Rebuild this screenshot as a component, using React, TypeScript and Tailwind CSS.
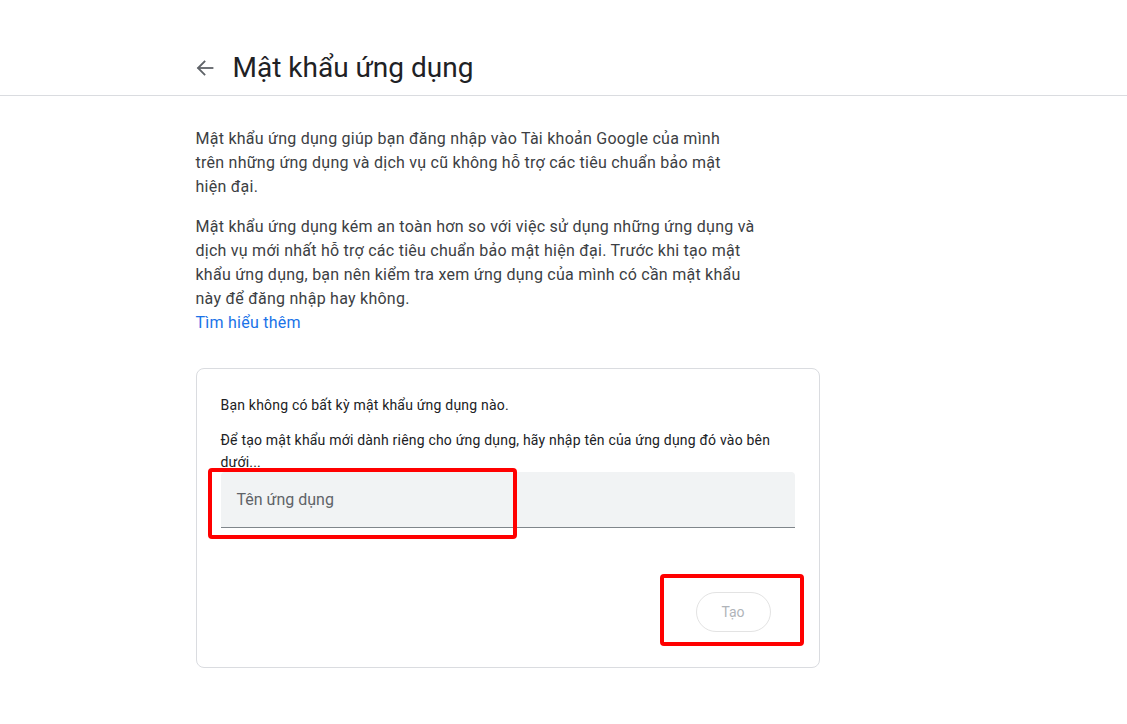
import React from "react";

const p1 = [
  "Mật khẩu ứng dụng giúp bạn đăng nhập vào Tài khoản Google của mình",
  "trên những ứng dụng và dịch vụ cũ không hỗ trợ các tiêu chuẩn bảo mật",
  "hiện đại.",
];
const p2 = [
  "Mật khẩu ứng dụng kém an toàn hơn so với việc sử dụng những ứng dụng và",
  "dịch vụ mới nhất hỗ trợ các tiêu chuẩn bảo mật hiện đại. Trước khi tạo mật",
  "khẩu ứng dụng, bạn nên kiểm tra xem ứng dụng của mình có cần mật khẩu",
  "này để đăng nhập hay không.",
];

export default function App() {
  return (
    <div className="min-h-screen bg-white text-[#202124]" style={{ fontFamily: "Roboto, 'Noto Sans', Arial, sans-serif" }}>
      <header className="h-[96px] border-b border-[#dadce0]">
        <div className="mx-auto flex h-full w-[736px] items-end pb-[9px]">
          <div className="flex h-[36px] items-center">
            <button className="flex h-[40px] w-[40px] -ml-[11px] items-center justify-center text-[#5f6368]">
              <svg width="24" height="24" viewBox="0 0 24 24" fill="none" stroke="currentColor" strokeWidth="1.8" strokeLinecap="square">
                <path d="M19.5 12H5.5" />
                <path d="M11.5 5.5 5 12l6.5 6.5" />
              </svg>
            </button>
            <h1 className="ml-[8px] text-[28px] leading-[36px] font-normal text-[#202124]">Mật khẩu ứng dụng</h1>
          </div>
        </div>
      </header>

      <main className="mx-auto w-[736px] pt-[31px]">
        <div className="w-[560px] text-[16px] leading-[24px] tracking-[0.25px] text-[#3c4043]">
          <p>
            {p1.map((l) => (
              <span key={l} className="block whitespace-nowrap">{l}</span>
            ))}
          </p>
          <p className="mt-[16px]">
            {p2.map((l) => (
              <span key={l} className="block whitespace-nowrap">{l}</span>
            ))}
          </p>
          <a className="text-[#1a73e8]">Tìm hiểu thêm</a>
        </div>

        <div className="relative mt-[33px] w-[624px] rounded-[8px] border border-[#dadce0] px-[24px] pt-[26px] pb-[35px]">
          <p className="text-[14px] leading-[20px] tracking-[0.2px] text-[#202124]">Bạn không có bất kỳ mật khẩu ứng dụng nào.</p>
          <p className="mt-[14px] text-[14px] leading-[22px] tracking-[0.2px] text-[#202124]">
            Để tạo mật khẩu mới dành riêng cho ứng dụng, hãy nhập tên của ứng dụng đó vào bên dưới...
          </p>
          <div className="-mt-[1px] flex h-[56px] items-center rounded-t-[4px] border-b border-[#80868b] bg-[#f1f3f4] px-[16px]">
            <span className="text-[16px] text-[#5f6368]">Tên ứng dụng</span>
          </div>
          <div className="mt-[64px] flex justify-end pr-[24px]">
            <button className="h-[40px] w-[75px] rounded-full border border-[#e3e3e3] text-[14px] text-[#b0b4b9]">Tạo</button>
          </div>

          <div className="pointer-events-none absolute left-[11px] top-[99px] h-[71px] w-[309px] rounded-[4px] border-[4px] border-[#ff0000]" />
          <div className="pointer-events-none absolute left-[463px] top-[205px] h-[72px] w-[144px] rounded-[4px] border-[4px] border-[#ff0000]" />
        </div>
      </main>
    </div>
  );
}
